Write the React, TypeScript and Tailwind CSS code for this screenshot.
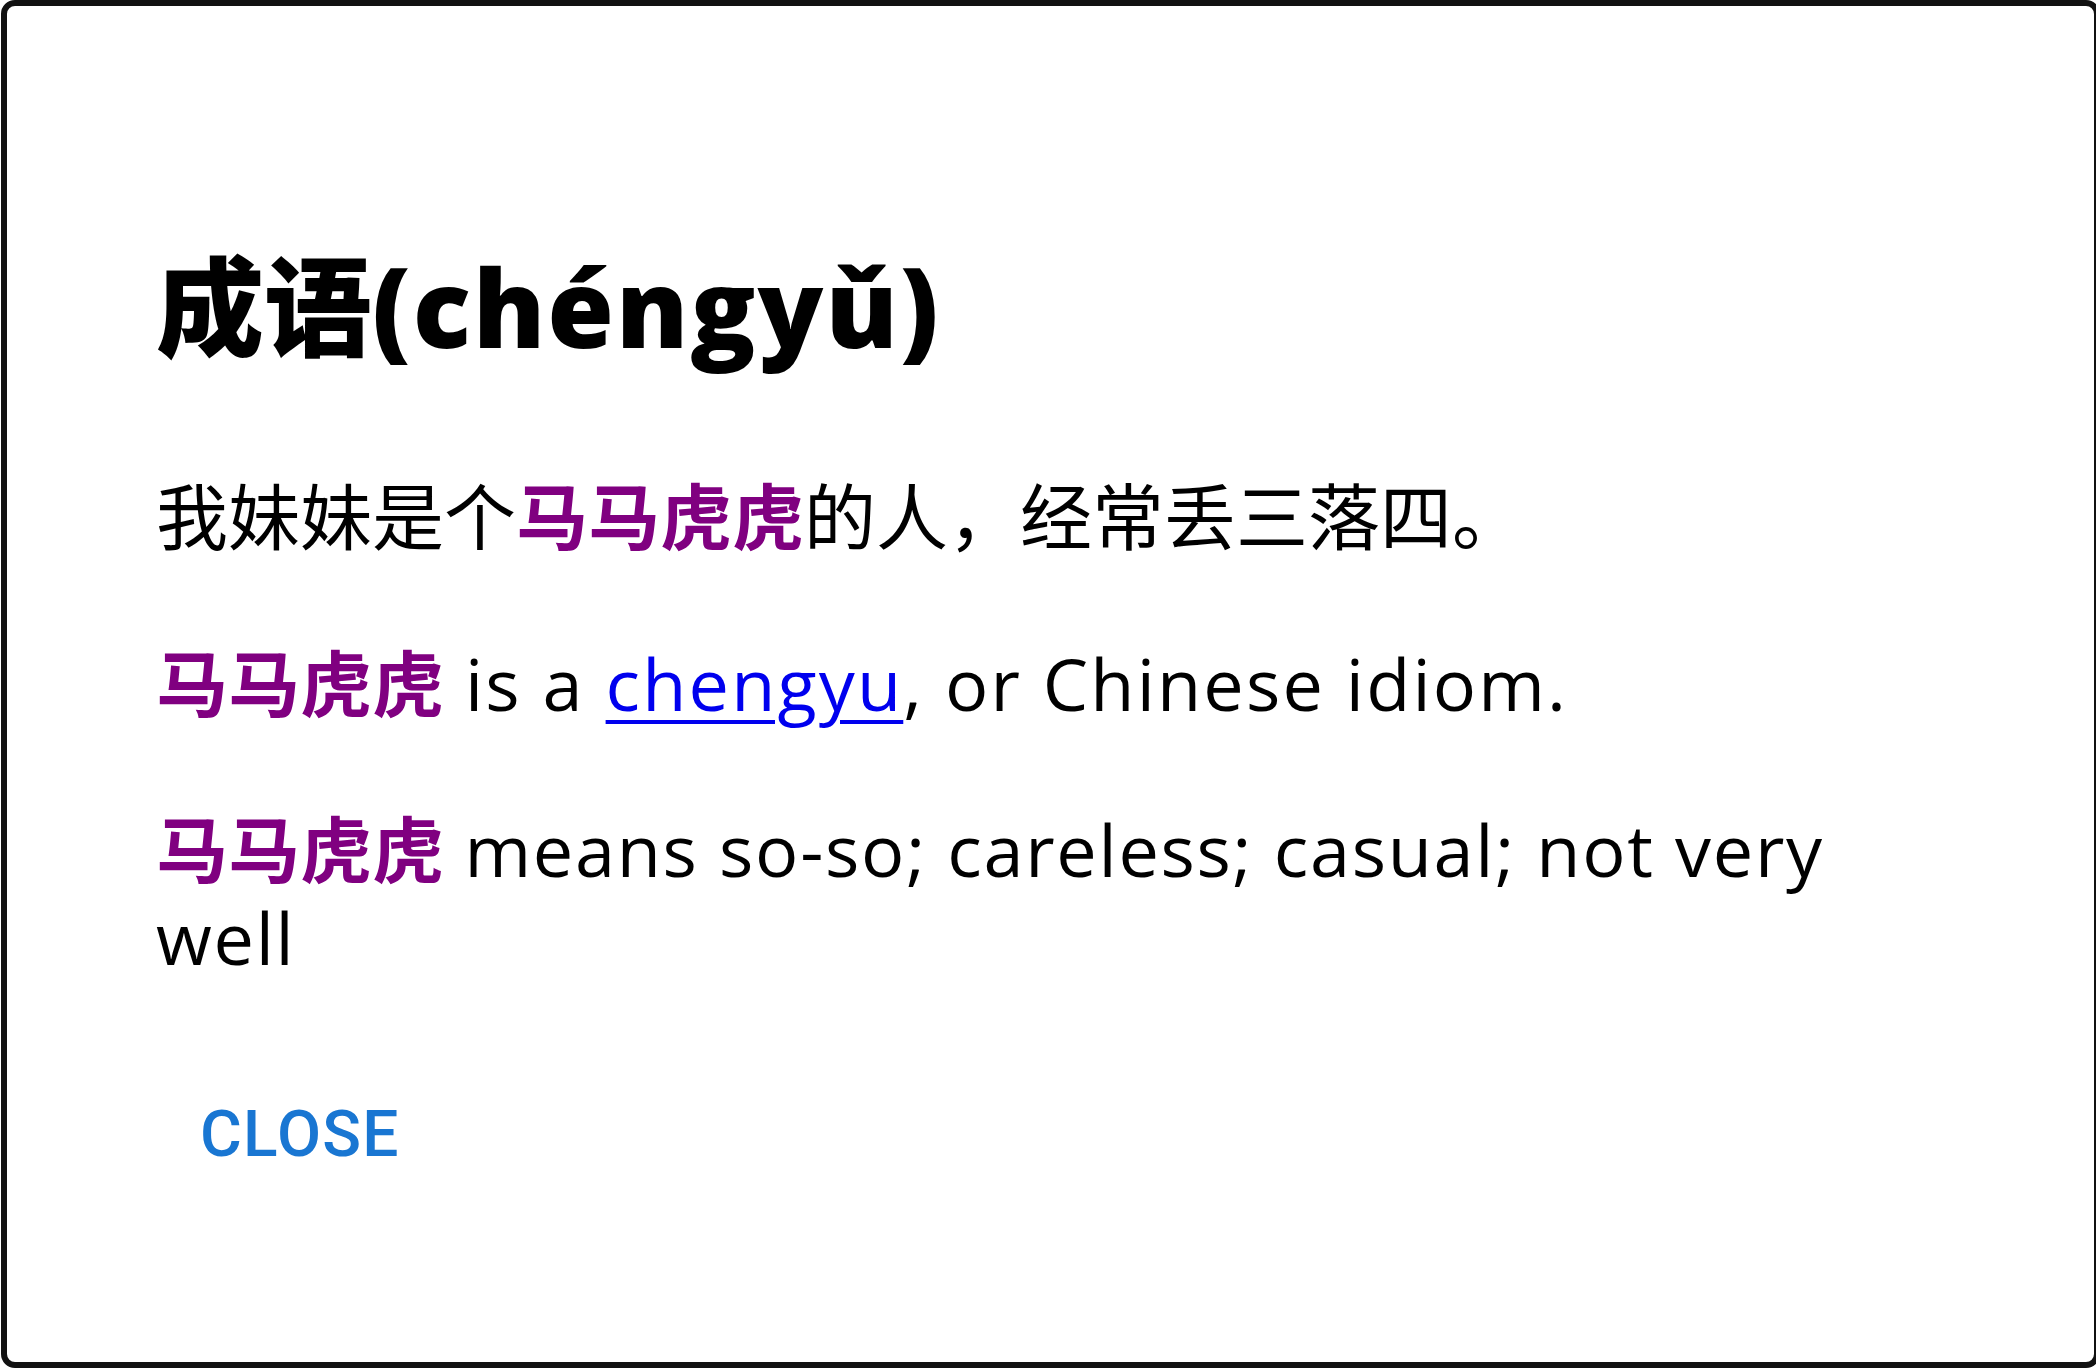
import React from "react";

const latin = "font-['Open_Sans','Noto_Sans_CJK_SC',sans-serif]";

export default function App() {
  return (
    <div className="h-screen w-screen overflow-hidden bg-white">
      <div className="ml-[1px] h-full w-[2099px] rounded-[14px] border-[6px] border-[#111111] bg-white">
        <div className={`flex flex-col pl-[149px] pr-[150px] pt-[236px] text-black ${latin}`}>
          <h1 className="text-[108px] leading-[130px] font-extrabold">
            <span>成语</span>
            <span className="tracking-[0.018em]">(chéngyǔ)</span>
          </h1>
          <p className="mt-[100px] text-[72px] leading-[88px] font-normal">
            我妹妹是个<span className="font-bold text-[#800080]">马马虎虎</span>的人，经常丢三落四。
          </p>
          <p className="mt-[79px] text-[72px] leading-[88px] font-normal">
            <span className="font-bold text-[#800080]">马马虎虎</span>
            <span className="tracking-[0.03em]">
              {" "}is a{" "}
              <a href="#" className="text-[#0000ee] underline decoration-[4px] underline-offset-[9px]">
                chengyu
              </a>
              , or Chinese idiom.
            </span>
          </p>
          <p className="mt-[78px] text-[72px] leading-[88px] font-normal">
            <span className="font-bold text-[#800080]">马马虎虎</span>
            <span className="tracking-[0.024em]"> means so-so; careless; casual; not very well</span>
          </p>
          <div className="mt-[122px] pl-[44px]">
            <button className="font-['Roboto',sans-serif] text-[64px] leading-[64px] font-medium uppercase tracking-[0.02em] text-[#1976d2]">
              Close
            </button>
          </div>
        </div>
      </div>
    </div>
  );
}
